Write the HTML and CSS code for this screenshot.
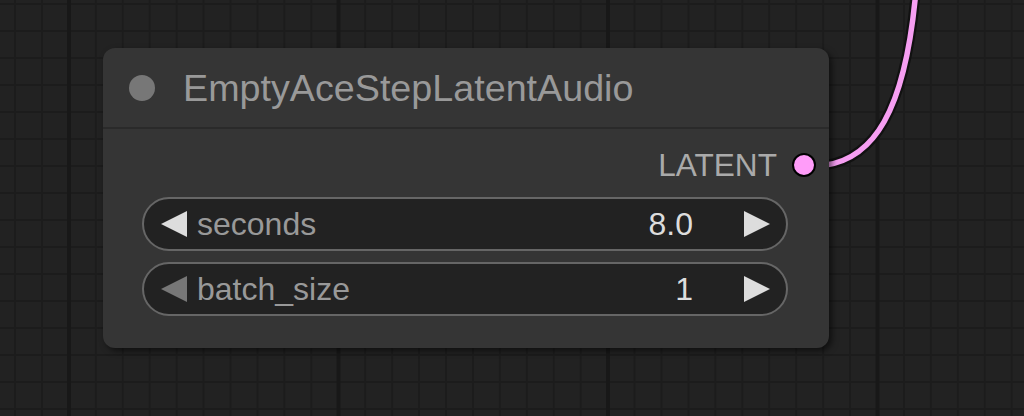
FILE: index.html
```html
<!DOCTYPE html>
<html>
<head>
<meta charset="utf-8">
<link rel="stylesheet" href="styles.css">
</head>
<body>
<div class="canvas">
  <svg class="links" width="1024" height="416" viewBox="0 0 1024 416">
    <path class="link-shadow" d="M 826 165 C 872 158, 905 115, 916 -10"/>
    <path class="link" d="M 826 165 C 872 158, 905 115, 916 -10"/>
  </svg>
  <div class="node">
    <div class="node-title">
      <span class="title-dot"></span>
      <span class="title-text">EmptyAceStepLatentAudio</span>
    </div>
    <div class="node-body">
      <div class="output-row">
        <span class="slot-label">LATENT</span>
        <span class="slot-dot"></span>
      </div>
      <div class="widgets">
        <div class="widget">
          <svg class="arrow" width="28" height="28" viewBox="0 0 28 28"><polygon points="27,1 1,14 27,27" class="arrow-on"/></svg>
          <span class="w-label">seconds</span>
          <span class="w-value">8.0</span>
          <svg class="arrow" width="28" height="28" viewBox="0 0 28 28"><polygon points="1,1 27,14 1,27" class="arrow-on"/></svg>
        </div>
        <div class="widget">
          <svg class="arrow" width="28" height="28" viewBox="0 0 28 28"><polygon points="27,1 1,14 27,27" class="arrow-off"/></svg>
          <span class="w-label">batch_size</span>
          <span class="w-value">1</span>
          <svg class="arrow" width="28" height="28" viewBox="0 0 28 28"><polygon points="1,1 27,14 1,27" class="arrow-on"/></svg>
        </div>
      </div>
    </div>
  </div>
</div>
</body>
</html>
```

FILE: styles.css
```css
html, body {
  margin: 0;
  padding: 0;
}
body {
  width: 1024px;
  height: 416px;
  overflow: hidden;
  font-family: "Liberation Sans", Arial, sans-serif;
}
.canvas {
  position: relative;
  width: 1024px;
  height: 416px;
  background-color: #222222;
  background-image:
    linear-gradient(to right, #181818 4px, transparent 4px),
    linear-gradient(to right, #1c1c1c 2px, transparent 2px),
    linear-gradient(to bottom, #1c1c1c 2px, transparent 2px);
  background-size: 269.5px 100%, 26.95px 100%, 100% 27px;
  background-position: 67px 0, 14px 0, 0 3px;
}
.links {
  position: absolute;
  left: 0;
  top: 0;
}
.link-shadow {
  fill: none;
  stroke: #111;
  stroke-width: 10;
}
.link {
  fill: none;
  stroke: #f69ef2;
  stroke-width: 5.5;
}
.node {
  position: absolute;
  left: 103px;
  top: 48px;
  width: 726px;
  height: 300px;
  background: #353535;
  border-radius: 12px;
  box-shadow: 3px 3px 6px rgba(0, 0, 0, 0.55);
  display: flex;
  flex-direction: column;
}
.node-title {
  height: 79px;
  display: flex;
  align-items: center;
  padding-left: 26px;
  gap: 28px;
  border-bottom: 2px solid #2a2a2a;
}
.title-dot {
  width: 26px;
  height: 26px;
  border-radius: 50%;
  background: #777;
}
.title-text {
  color: #999;
  font-size: 37.7px;
  line-height: 1;
  margin-top: 2px;
}
.node-body {
  display: flex;
  flex-direction: column;
}
.output-row {
  height: 68px;
  display: flex;
  justify-content: flex-end;
  align-items: center;
  padding-right: 13px;
  gap: 15px;
  padding-top: 6px;
  box-sizing: border-box;
}
.slot-label {
  color: #aaa;
  font-size: 31.6px;
  line-height: 1;
}
.slot-dot {
  width: 20px;
  height: 20px;
  border-radius: 50%;
  background: #ff9cf9;
  border: 2px solid #000;
  margin-top: -3px;
}
.widgets {
  display: flex;
  flex-direction: column;
  gap: 11px;
  margin: 0 41px 0 39px;
}
.widget {
  height: 50px;
  border: 2px solid #666;
  border-radius: 27px;
  background: #222;
  display: flex;
  align-items: center;
  padding: 0 15px 0 16px;
}
.arrow {
  display: block;
}
.arrow-on {
  fill: #ddd;
}
.arrow-off {
  fill: #777;
}
.w-label {
  color: #999;
  font-size: 32px;
  margin-left: 9px;
  flex: 1;
}
.w-value {
  color: #ddd;
  font-size: 32px;
  margin-right: 50px;
}
```
